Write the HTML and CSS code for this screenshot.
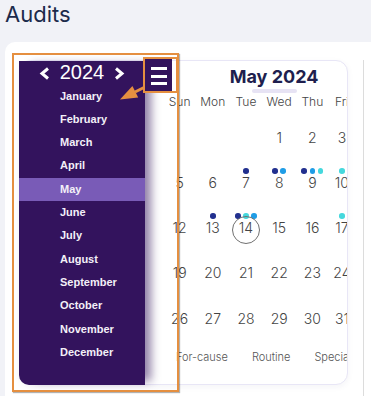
FILE: index.html
```html
<!DOCTYPE html>
<html lang="en">
<head>
  <meta charset="UTF-8">
  <meta name="viewport" content="width=device-width, initial-scale=1.0">
  <title>Audits</title>
  <link rel="stylesheet" href="styles.css">
</head>
<body>
  <h1 class="page-title">Audits</h1>

  <main class="sheet">
    <!-- calendar card (Saturday column sits outside the visible area) -->
    <section class="calendar">
      <div class="cal-head">
        <div class="cal-title">May 2024</div>
        <div class="cal-bar"></div>
      </div>

      <div class="cal-week">
        <div>Sun</div><div>Mon</div><div>Tue</div><div>Wed</div><div>Thu</div><div>Fri</div>
      </div>

      <div class="cal-days">
        <div class="day"></div>
        <div class="day"></div>
        <div class="day"></div>
        <div class="day"><div class="dots"></div><span class="num">1</span></div>
        <div class="day"><div class="dots"></div><span class="num">2</span></div>
        <div class="day"><div class="dots"></div><span class="num">3</span></div>

        <div class="day"><div class="dots"></div><span class="num">5</span></div>
        <div class="day"><div class="dots"></div><span class="num">6</span></div>
        <div class="day"><div class="dots"><i class="dot navy"></i></div><span class="num">7</span></div>
        <div class="day"><div class="dots"><i class="dot navy"></i><i class="dot blue"></i></div><span class="num">8</span></div>
        <div class="day"><div class="dots"><i class="dot navy"></i><i class="dot blue"></i><i class="dot cyan"></i></div><span class="num">9</span></div>
        <div class="day"><div class="dots"><i class="dot cyan"></i></div><span class="num">10</span></div>

        <div class="day"><div class="dots"></div><span class="num">12</span></div>
        <div class="day"><div class="dots"><i class="dot navy"></i></div><span class="num">13</span></div>
        <div class="day today"><div class="dots"><i class="dot navy"></i><i class="dot cyan"></i><i class="dot blue"></i></div><span class="num">14</span></div>
        <div class="day"><div class="dots"></div><span class="num">15</span></div>
        <div class="day"><div class="dots"></div><span class="num">16</span></div>
        <div class="day"><div class="dots"><i class="dot cyan"></i></div><span class="num">17</span></div>

        <div class="day"><div class="dots"></div><span class="num">19</span></div>
        <div class="day"><div class="dots"></div><span class="num">20</span></div>
        <div class="day"><div class="dots"></div><span class="num">21</span></div>
        <div class="day"><div class="dots"></div><span class="num">22</span></div>
        <div class="day"><div class="dots"></div><span class="num">23</span></div>
        <div class="day"><div class="dots"></div><span class="num">24</span></div>

        <div class="day"><div class="dots"></div><span class="num">26</span></div>
        <div class="day"><div class="dots"></div><span class="num">27</span></div>
        <div class="day"><div class="dots"></div><span class="num">28</span></div>
        <div class="day"><div class="dots"></div><span class="num">29</span></div>
        <div class="day"><div class="dots"></div><span class="num">30</span></div>
        <div class="day"><div class="dots"></div><span class="num">31</span></div>
      </div>

      <div class="legend">
        <span>For-cause</span>
        <span>Routine</span>
        <span>Specia</span>
      </div>
    </section>

    <div class="next-panel"></div>

    <!-- month drawer -->
    <aside class="drawer">
      <div class="year-nav">
        <svg width="11" height="13" viewBox="0 0 11 13"><polyline points="9,1.5 3,6.5 9,11.5" fill="none" stroke="#fff" stroke-width="3"/></svg>
        <span>2024</span>
        <svg width="11" height="13" viewBox="0 0 11 13"><polyline points="2,1.5 8,6.5 2,11.5" fill="none" stroke="#fff" stroke-width="3"/></svg>
      </div>
      <ul class="months">
        <li>January</li>
        <li>February</li>
        <li>March</li>
        <li>April</li>
        <li class="active">May</li>
        <li>June</li>
        <li>July</li>
        <li>August</li>
        <li>September</li>
        <li>October</li>
        <li>November</li>
        <li>December</li>
      </ul>
    </aside>

    <button class="menu-btn"><span></span><span></span><span></span></button>

    <!-- annotation -->
    <div class="note-frame"></div>
    <div class="note-box"></div>
    <svg class="note-arrow" width="35" height="20" viewBox="0 0 35 20">
      <line x1="29" y1="3.5" x2="20" y2="8" stroke="#e58f40" stroke-width="3"/>
      <polygon points="5,15.5 17.4,2 23.2,13.6" fill="#e58f40"/>
    </svg>
  </main>
</body>
</html>
```

FILE: styles.css
```css
body {
  margin: 0;
  height: 396px;
  overflow: hidden;
  background: #f1f2f7;
  font-family: Inter, "Liberation Sans", sans-serif;
}

.page-title {
  margin: 0;
  padding: 1px 0 0 5px;
  font-size: 22px;
  line-height: 26px;
  font-weight: 400;
  color: #1c2a4b;
}

.sheet {
  position: relative;
  display: flex;
  align-items: flex-start;
  gap: 15px;
  margin: 15px 0 0 5px;
  padding: 18px 0 0 14px;
  height: 354px;
  box-sizing: border-box;
  background: #fff;
  border-radius: 10px 0 0 0;
}

/* calendar */
.calendar {
  flex: none;
  width: 329px;
  height: 325px;
  box-sizing: border-box;
  overflow: hidden;
  background: #fff;
  border: 1px solid #e8e6f6;
  border-radius: 12px;
  box-shadow: 0 2px 6px rgba(40,30,90,0.05);
}

.cal-head {
  width: 222px;
  margin-left: 143px;
  padding-top: 4.5px;
  text-align: center;
}

.cal-title {
  font-size: 18px;
  line-height: 22px;
  font-weight: 700;
  color: #201f4e;
}

.cal-bar {
  width: 45px;
  height: 4px;
  margin: 1px auto 0;
  background: #e7e3f4;
  border-radius: 2px;
}

.cal-week,
.cal-days {
  display: grid;
  grid-template-columns: repeat(5, 33.2px) 26px;
  margin-left: 143px;
}

.cal-week {
  margin-top: 1px;
  font-size: 12px;
  line-height: 16px;
  font-weight: 300;
  color: #444;
  text-align: center;
}

.cal-days {
  margin-top: 10.3px;
  grid-auto-rows: 45.2px;
}

.day {
  display: flex;
  flex-direction: column;
  align-items: center;
  padding-top: 3px;
}

.dots {
  display: flex;
  gap: 2.6px;
  height: 6px;
}

.dot {
  width: 5.6px;
  height: 5.6px;
  border-radius: 50%;
}
.dot.navy { background: #22308f; }
.dot.blue { background: #1f9de6; }
.dot.cyan { background: #45d8dd; }

.num {
  position: relative;
  font-size: 14px;
  line-height: 17px;
  font-weight: 300;
  color: #444;
}

.today .num::after {
  content: "";
  position: absolute;
  left: 50%;
  top: 50%;
  width: 26px;
  height: 26px;
  border: 1px solid #707070;
  border-radius: 50%;
  transform: translate(-50%, -50%) translateY(2px);
}

.legend {
  display: flex;
  gap: 24px;
  margin: 3.8px 0 0 156px;
  font-size: 11px;
  line-height: 14px;
  font-weight: 300;
  color: #555;
  white-space: nowrap;
}

.next-panel {
  flex: 1;
  height: 336px;
  border-left: 1px solid #dcdcdc;
}

/* drawer */
.drawer {
  position: absolute;
  left: 14px;
  top: 19px;
  width: 126px;
  height: 324px;
  background: #33135d;
  border-bottom-left-radius: 10px;
  box-shadow: 10px 0 10px -4px rgba(55,25,95,0.55);
  color: #f3f0f8;
  font-family: "Liberation Sans", Arial, sans-serif;
}

.year-nav {
  display: flex;
  justify-content: center;
  align-items: center;
  gap: 10px;
  height: 23.5px;
  font-size: 20px;
  line-height: 23.5px;
  color: #fff;
}

.year-nav svg {
  margin-top: 2px;
}

.months {
  list-style: none;
  margin: 0;
  padding: 0;
}

.months li {
  height: 23.33px;
  line-height: 23.33px;
  padding-left: 41px;
  font-size: 11px;
  font-weight: 700;
}

.months li.active {
  background: #795bb7;
}

.menu-btn {
  position: absolute;
  left: 140px;
  top: 16px;
  width: 27px;
  height: 33px;
  padding: 9px 0 0 6px;
  box-sizing: border-box;
  border: 0;
  background: #33135d;
  display: flex;
  flex-direction: column;
  gap: 4.5px;
}

.menu-btn span {
  display: block;
  width: 16px;
  height: 3px;
  background: #fff;
}

/* orange annotation */
.note-frame {
  position: absolute;
  left: 7px;
  top: 11px;
  width: 167px;
  height: 339px;
  box-sizing: border-box;
  border: 2.5px solid #e58f40;
  box-shadow: 1px 1px 1px rgba(0,0,0,0.3);
}

.note-box {
  position: absolute;
  left: 137.5px;
  top: 14.5px;
  width: 35px;
  height: 36px;
  box-sizing: border-box;
  border: 2.5px solid #e58f40;
}

.note-arrow {
  position: absolute;
  left: 110px;
  top: 42px;
}
```
